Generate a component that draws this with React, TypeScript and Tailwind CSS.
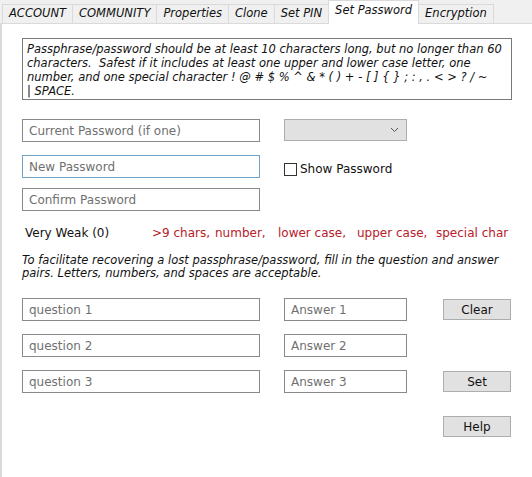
const tabs = ['ACCOUNT', 'COMMUNITY', 'Properties', 'Clone', 'Set PIN', 'Set Password', 'Encryption'];

function Field({ placeholder, w = 'w-[238px]', focus = false }: { placeholder: string; w?: string; focus?: boolean }) {
  return (
    <div
      className={`${w} h-[23px] border ${focus ? 'border-[#6fa3c7]' : 'border-[#8a8a8a]'} bg-white px-[6px] flex items-center text-[12px] text-[#707070]`}
    >
      {placeholder}
    </div>
  );
}

function Btn({ label }: { label: string }) {
  return (
    <div className="w-[68px] h-[21px] border border-[#adadad] bg-[#e1e1e1] flex items-center justify-center text-[12px] text-[#111]">
      {label}
    </div>
  );
}

export default function App() {
  return (
    <div className="w-[532px] h-[477px] bg-white overflow-hidden font-['DejaVu_Sans',sans-serif]">
      <div className="h-[24px] bg-[#f0f0f0] flex items-end pl-[2px] border-b border-[#dadada]">
        {tabs.map((t) => {
          const active = t === 'Set Password';
          return (
            <div
              key={t}
              className={`px-[6px] italic text-[11.5px] flex items-center border-l border-r border-t border-[#dadada] -mr-px ${
                active ? 'h-[24px] bg-white text-[#111] pb-[4px] -mb-px' : 'h-[19px] bg-[#f0f0f0] text-[#111]'
              }`}
            >
              {t}
            </div>
          );
        })}
      </div>
      <div className="h-[453px] border-l-2 border-[#d9d9d9] pl-[20px] pt-[14px]">
        <div className="w-[490px] h-[62px] border border-[#7a7a7a] px-[4px] pt-[3px] text-[11.5px] leading-[14px] italic text-[#111] whitespace-nowrap">
          Passphrase/password should be at least 10 characters long, but no longer than 60
          <br />
          characters.&nbsp; Safest if it includes at least one upper and lower case letter, one
          <br />
          number, and one special character ! @ # $ % ^ &amp; * ( ) + - [ ] {'{'} {'}'} ; : , . &lt; &gt; ? / ~
          <br />| SPACE.
        </div>

        <div className="flex mt-[19px]">
          <div className="flex flex-col">
            <Field placeholder="Current Password (if one)" />
            <div className="h-[13px]" />
            <Field placeholder="New Password" focus />
            <div className="h-[10px]" />
            <Field placeholder="Confirm Password" />
          </div>
          <div className="ml-[24px] flex flex-col">
            <div className="w-[123px] h-[22px] border border-[#adadad] bg-[#e1e1e1] flex items-center justify-end pr-[7px]">
              <svg width="9" height="6" viewBox="0 0 9 6">
                <path d="M1 1l3.5 3.5L8 1" stroke="#555" strokeWidth="1" fill="none" />
              </svg>
            </div>
            <div className="flex items-center mt-[19px] text-[12px] text-[#111]">
              <div className="w-[13px] h-[13px] border border-[#333] bg-white mr-[3px]" />
              Show Password
            </div>
          </div>
        </div>

        <div className="flex mt-[14px] text-[12px] items-center h-[16px]">
          <span className="ml-[3px] w-[127px] text-[#111]">Very Weak (0)</span>
          <span className="text-[#b8202a] w-[63px]">&gt;9 chars,</span>
          <span className="text-[#b8202a] w-[63px]">number,</span>
          <span className="text-[#b8202a] w-[79px]">lower case,</span>
          <span className="text-[#b8202a] w-[79px]">upper case,</span>
          <span className="text-[#b8202a]">special char</span>
        </div>

        <div className="mt-[13px] text-[11.5px] leading-[13px] italic text-[#111] w-[490px]">
          To facilitate recovering a lost passphrase/password, fill in the question and answer pairs. Letters, numbers, and spaces are acceptable.
        </div>

        <div className="flex mt-[18px]">
          <div className="flex flex-col gap-[13px]">
            <Field placeholder="question 1" />
            <Field placeholder="question 2" />
            <Field placeholder="question 3" />
          </div>
          <div className="ml-[24px] flex flex-col gap-[13px]">
            <Field placeholder="Answer 1" w="w-[123px]" />
            <Field placeholder="Answer 2" w="w-[123px]" />
            <Field placeholder="Answer 3" w="w-[123px]" />
          </div>
          <div className="ml-[36px] flex flex-col pt-[1px]">
            <Btn label="Clear" />
            <div className="h-[51px]" />
            <Btn label="Set" />
            <div className="h-[24px]" />
            <Btn label="Help" />
          </div>
        </div>
      </div>
    </div>
  );
}
